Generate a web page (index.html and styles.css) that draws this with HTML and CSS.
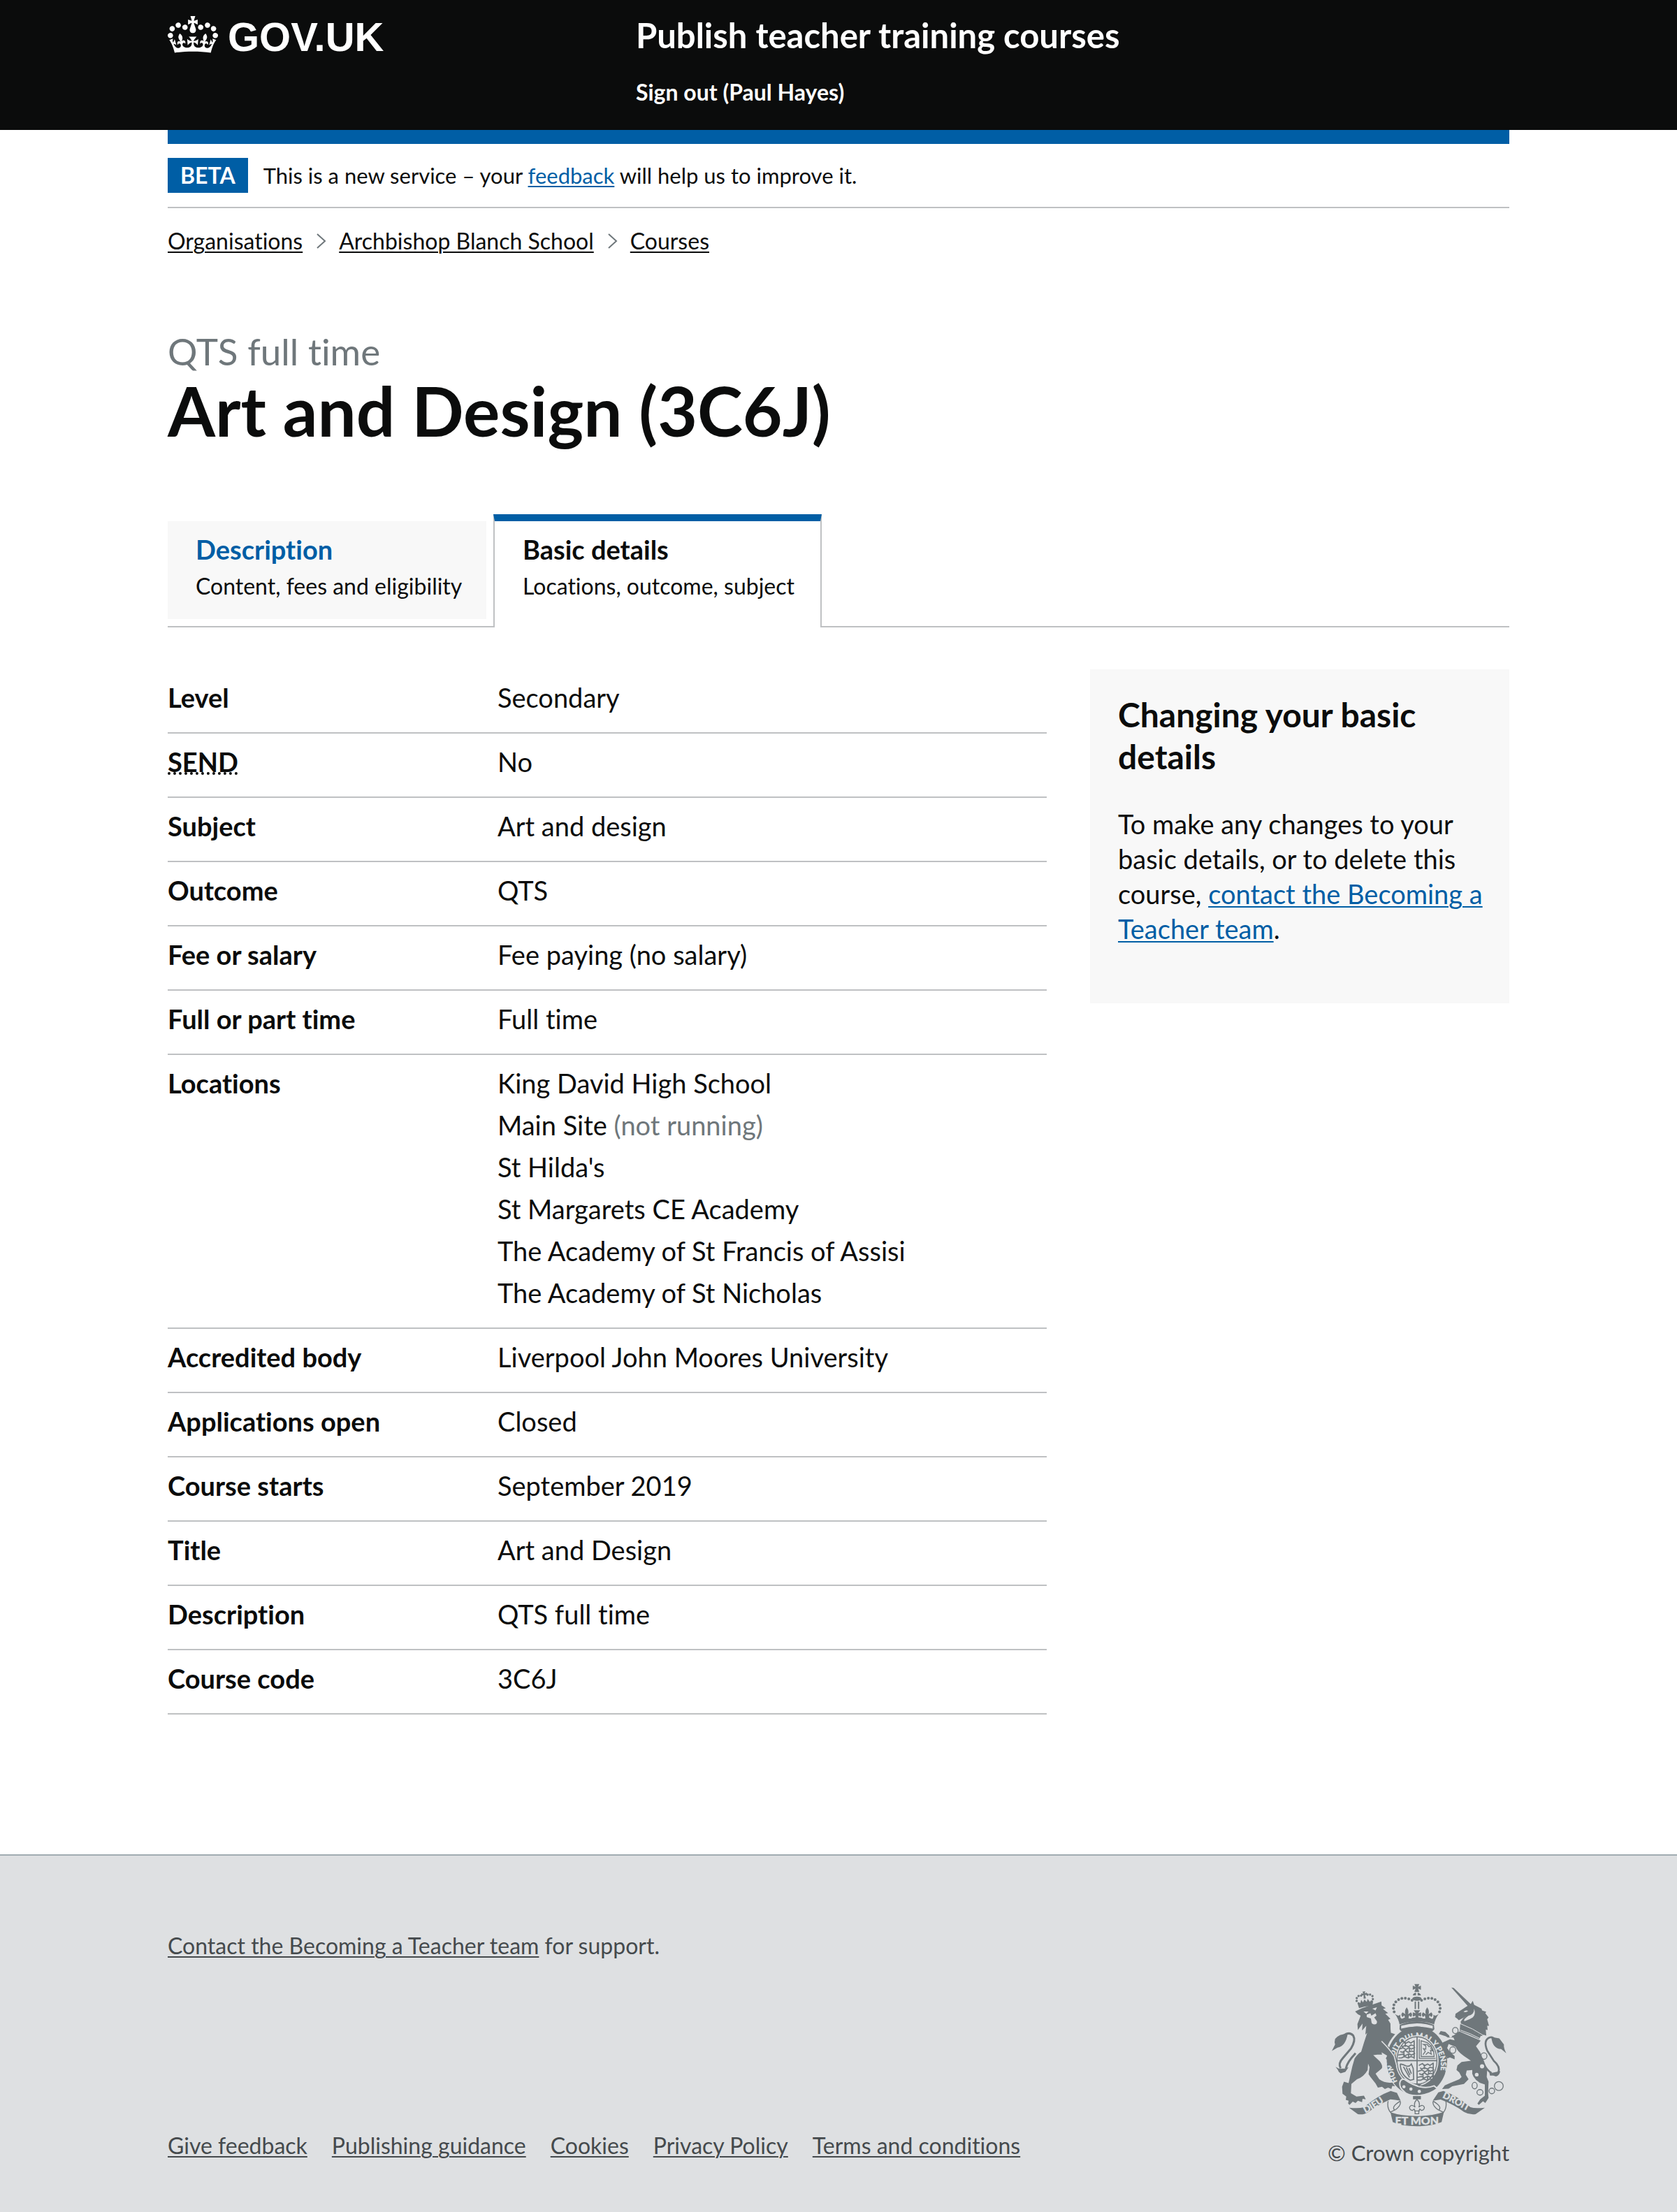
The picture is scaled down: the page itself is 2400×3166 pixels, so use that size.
FILE: index.html
```html
<!DOCTYPE html>
<html lang="en">
<head>
<meta charset="utf-8">
<meta name="viewport" content="width=device-width, initial-scale=1">
<title>Art and Design (3C6J) - Publish teacher training courses</title>
<link rel="stylesheet" href="styles.css">
</head>
<body>
<header class="header">
  <div class="container header__inner">
    <a class="logo" href="#">
      <svg class="logo__crown" viewBox="0 0 132 97" aria-hidden="true"><path fill="currentColor" fill-rule="evenodd" d="M25 30.2c3.5 1.5 7.7-.2 9.1-3.7 1.5-3.6-.2-7.8-3.9-9.2-3.6-1.4-7.6.3-9.1 3.9-1.4 3.5.3 7.5 3.9 9zM9 39.5c3.6 1.5 7.8-.2 9.2-3.7 1.5-3.6-.2-7.8-3.9-9.1-3.6-1.5-7.6.2-9.1 3.8-1.4 3.5.3 7.5 3.8 9zM4.4 57.2c3.5 1.5 7.7-.2 9.1-3.8 1.5-3.6-.2-7.7-3.9-9.1-3.5-1.5-7.6.3-9.1 3.8-1.4 3.5.3 7.6 3.9 9.1zm38.3-21.4c3.5 1.5 7.7-.2 9.1-3.8 1.5-3.6-.2-7.7-3.9-9.1-3.6-1.5-7.6.3-9.1 3.8-1.3 3.6.4 7.7 3.9 9.1zm64.4-5.6c-3.6 1.5-7.8-.2-9.1-3.7-1.5-3.6.2-7.8 3.8-9.2 3.6-1.4 7.7.3 9.2 3.9 1.3 3.5-.4 7.5-3.9 9zm15.9 9.3c-3.6 1.5-7.7-.2-9.1-3.7-1.5-3.6.2-7.8 3.7-9.1 3.6-1.5 7.7.2 9.2 3.8 1.5 3.5-.3 7.5-3.8 9zm4.7 17.7c-3.6 1.5-7.8-.2-9.2-3.8-1.5-3.6.2-7.7 3.9-9.1 3.6-1.5 7.7.3 9.2 3.8 1.3 3.5-.4 7.6-3.9 9.1zM89.3 35.8c-3.6 1.5-7.8-.2-9.2-3.8-1.4-3.6.2-7.7 3.9-9.1 3.6-1.5 7.7.3 9.2 3.8 1.4 3.6-.3 7.7-3.9 9.1zM69.7 17.7l8.9 4.7V9.3l-8.9 2.8c-.2-.3-.5-.6-.9-.9L72.4 0H59.6l3.5 11.2c-.3.3-.6.5-.9.9l-8.8-2.8v13.1l8.8-4.7c.3.3.6.7.9.9l-5 15.4v.1c-.2.8-.4 1.6-.4 2.4 0 4.1 3.1 7.5 7 8.1h.2c.3 0 .7.1 1 .1.4 0 .7 0 1-.1h.2c4-.6 7.1-4.1 7.1-8.1 0-.8-.1-1.7-.4-2.4V34l-5.1-15.4c.4-.2.7-.6 1-.9zM66 92.8c16.9 0 32.8 1.1 47.1 3.2 4-16.9 8.9-26.7 14-33.5l-9.6-3.4c1 4.9 1.1 7.2 0 10.2-1.5-1.4-3-4.3-4.2-8.7L108.6 76c2.8-2 5-3.2 7.5-3.3-4.4 9.4-10 11.9-13.6 11.2-4.3-.8-6.3-4.6-5.6-7.9 1-4.7 5.7-5.9 8-.5 4.3-8.7-3-11.4-7.6-8.8 7.1-7.2 7.9-13.5 2.1-21.1-8 6.1-8.1 12.3-4.5 20.8-4.7-5.4-12.1-2.5-9.5 6.2 3.4-5.2 7.9-2 7.2 3.1-.6 4.3-6.4 7.8-13.5 7.2-10.3-.9-10.9-8-11.2-13.8 2.5-.5 7.1 1.8 11 7.3L80.2 60c-4.1 4.4-8 5.3-12.3 5.4 1.4-4.4 8-11.6 8-11.6H55.5s6.4 7.2 7.9 11.6c-4.2-.1-8-1-12.3-5.4l1.4 16.4c3.9-5.5 8.5-7.7 10.9-7.3-.3 5.8-.9 12.8-11.1 13.8-7.2.6-12.9-2.9-13.5-7.2-.7-5 3.8-8.3 7.1-3.1 2.7-8.7-4.6-11.6-9.4-6.2 3.7-8.5 3.6-14.7-4.6-20.8-5.8 7.6-5 13.9 2.2 21.1-4.7-2.6-11.9.1-7.7 8.8 2.3-5.5 7.1-4.2 8.1.5.7 3.3-1.3 7.1-5.7 7.9-3.5.7-9-1.8-13.5-11.2 2.5.1 4.7 1.3 7.5 3.3l-4.7-15.4c-1.2 4.4-2.7 7.2-4.3 8.7-1.1-3-.9-5.3 0-10.2l-9.5 3.4c5 6.9 9.9 16.7 14 33.5 14.8-2.1 30.8-3.2 47.7-3.2z"/></svg>
      <span class="logo__text">GOV.UK</span>
    </a>
    <div class="header__content">
      <a class="header__service" href="#">Publish teacher training courses</a>
      <a class="header__signout" href="#">Sign out (Paul Hayes)</a>
    </div>
  </div>
</header>

<div class="container">
  <div class="header-bar"></div>
  <div class="phase-banner">
    <strong class="phase-banner__tag">BETA</strong>
    <span>This is a new service – your <a class="link" href="#">feedback</a> will help us to improve it.</span>
  </div>

  <nav aria-label="Breadcrumb">
    <ol class="breadcrumbs">
      <li><a href="#">Organisations</a></li>
      <li><svg class="chevron" viewBox="0 0 14 22" aria-hidden="true"><path d="M1 1l11 10L1 21" fill="none" stroke="currentColor" stroke-width="2"/></svg><a href="#">Archbishop Blanch School</a></li>
      <li><svg class="chevron" viewBox="0 0 14 22" aria-hidden="true"><path d="M1 1l11 10L1 21" fill="none" stroke="currentColor" stroke-width="2"/></svg><a href="#">Courses</a></li>
    </ol>
  </nav>

  <main>
    <h1 class="title"><span class="title__caption">QTS full time</span> Art and Design (3C6J)</h1>

    <nav class="tabs" aria-label="Course sections">
      <a class="tab" href="#"><span class="tab__name">Description</span><span class="tab__hint">Content, fees and eligibility</span></a>
      <a class="tab tab--selected" href="#" aria-current="page"><span class="tab__name">Basic details</span><span class="tab__hint">Locations, outcome, subject</span></a>
    </nav>

    <div class="columns">
      <dl class="summary">
        <div class="summary__row"><dt>Level</dt><dd>Secondary</dd></div>
        <div class="summary__row"><dt><abbr title="Special educational needs and disability">SEND</abbr></dt><dd>No</dd></div>
        <div class="summary__row"><dt>Subject</dt><dd>Art and design</dd></div>
        <div class="summary__row"><dt>Outcome</dt><dd>QTS</dd></div>
        <div class="summary__row"><dt>Fee or salary</dt><dd>Fee paying (no salary)</dd></div>
        <div class="summary__row"><dt>Full or part time</dt><dd>Full time</dd></div>
        <div class="summary__row"><dt>Locations</dt><dd>
          <ul class="locations">
            <li>King David High School</li>
            <li>Main Site <span class="muted">(not running)</span></li>
            <li>St Hilda's</li>
            <li>St Margarets CE Academy</li>
            <li>The Academy of St Francis of Assisi</li>
            <li>The Academy of St Nicholas</li>
          </ul></dd></div>
        <div class="summary__row"><dt>Accredited body</dt><dd>Liverpool John Moores University</dd></div>
        <div class="summary__row"><dt>Applications open</dt><dd>Closed</dd></div>
        <div class="summary__row"><dt>Course starts</dt><dd>September 2019</dd></div>
        <div class="summary__row"><dt>Title</dt><dd>Art and Design</dd></div>
        <div class="summary__row"><dt>Description</dt><dd>QTS full time</dd></div>
        <div class="summary__row"><dt>Course code</dt><dd>3C6J</dd></div>
      </dl>
      <aside class="panel">
        <h2 class="panel__title">Changing your basic details</h2>
        <p class="panel__text">To make any changes to your basic details, or to delete this course, <a class="link" href="#">contact the Becoming a Teacher team</a>.</p>
      </aside>
    </div>
  </main>
</div>

<footer class="footer">
  <div class="container">
    <p class="footer__support"><a href="#">Contact the Becoming a Teacher team</a> for support.</p>
    <div class="footer__bottom">
      <ul class="footer__links">
        <li><a href="#">Give feedback</a></li>
        <li><a href="#">Publishing guidance</a></li>
        <li><a href="#">Cookies</a></li>
        <li><a href="#">Privacy Policy</a></li>
        <li><a href="#">Terms and conditions</a></li>
      </ul>
      <a class="copyright" href="#">
        <svg class="arms" viewBox="129 118 754 616" aria-hidden="true">
          <defs>
            <path id="ring" d="M414 540A103 119 0 1 1 584 538"/>
            <path id="dieu" d="M276 676Q322 654 382 608"/>
            <path id="droit" d="M606 608Q660 634 740 680"/>
            <g id="beads"><circle cx="477" cy="190" r="6"/><circle cx="463" cy="184" r="6"/><circle cx="448" cy="181" r="6"/><circle cx="433" cy="182" r="6"/><circle cx="419" cy="187" r="6"/><circle cx="407" cy="197" r="6"/><circle cx="399" cy="210" r="6"/><circle cx="397" cy="225" r="6"/><circle cx="400" cy="240" r="6"/></g>
            <g id="lis"><path d="M454 220q12 17 5 30l13-8q10 10 0 20l-8-7-3 15h-14l-3-15-8 7q-10-10 0-20l13 8q-7-13 5-30z"/></g>
            <g id="lions" fill="none" stroke="#6f777b" stroke-width="5"><path d="M424 374l16-8 8 10 14-8 10 6 14-10M430 384l6 6 12-6 14 6 10-8 16 4M420 400l18-6 12 8 14-8 10 6 16-8M426 410l10 4 12-8 12 8 14-6 14 4M416 426l20-4 12 6 16-8 10 6 16-8M418 438l14 0 12-6 16 6 12-6 16 6M486 362v80M448 370v20M466 392v20M442 412v24M462 420v20"/></g>
          </defs>
          <g fill="#6f777b">
            <!-- royal crown -->
            <path d="M487 120h21l-5 12 12-5v18l-12-5 5 14h-21l5-14-12 5v-18l12 5z"/>
            <path d="M494 156v13h-14q2-10 14-13zM501 156v13h14q-2-10-14-13z"/>
            <ellipse cx="498" cy="183" rx="20" ry="9"/>
            <use href="#beads"/><use href="#beads" transform="matrix(-1 0 0 1 995 0)"/>
            <path d="M488 195h6v33h-6zM502 195h6v33h-6z"/>
            <use href="#lis"/><use href="#lis" x="88"/>
            <path d="M484 233h28l-9 13 13-4v18l-13-4 4 12h-18l4-12-13 4v-18l13 4z"/>
            <path d="M403 248q14 14 24 4-3 16 6 18 10-6 21-6 12 8 22 2 12-6 22 2 10-8 22-2 12 6 22-2 12 0 20 6 10-2 6-18 10 10 24-4-16 22-20 46-73-26-149 0-4-24-20-46z"/>
            <path d="M424 296q74-32 147 0l2 18q-8 12-18 12-57-24-114 0-12 0-18-12z"/>
            <path fill="#dee0e2" d="M430 300q68-22 136 0v12q-68-18-136 0z"/>
            <!-- garter -->
            <ellipse cx="498" cy="451" rx="130" ry="148"/>
            <ellipse cx="498" cy="449" rx="93" ry="109" fill="#dee0e2"/>
            <text class="arms__motto" font-size="32"><textPath href="#ring">HONI SOIT QUI MAL Y PENSE</textPath></text>
            <ellipse cx="498" cy="449" rx="86" ry="102" fill="none" stroke="#6f777b" stroke-width="4"/>
            <path d="M496 347h5v203h-5zM412 447h172v5H412z"/>
            <use href="#lions"/><use href="#lions" x="82" y="96"/>
            <path fill="none" stroke="#6f777b" stroke-width="4" d="M508 358v82h70M516 364v68h56q0-40-30-60zM524 424l10-14-8-12 10 2 0-14-10-6 16 0 8 10 10-4-2 12 10 10-12-2 4 16-14-8-10 10"/>
            <path fill="none" stroke="#6f777b" stroke-width="5" d="M426 464q2 50 44 70l14-4-2-46-8-20q-8 14-24 8-10-6-24-8M440 476l26 46M452 478l16 34M464 482l10 24"/>
            <path stroke="#dee0e2" stroke-width="6" d="M424 548q2-22 20-18 70 50 128 28l14 12q-40 30-88 30-44 0-60-22-14-10-14-30z"/>
            <circle cx="442" cy="562" r="7" fill="#dee0e2"/><circle cx="472" cy="572" r="7" fill="#dee0e2"/><circle cx="508" cy="582" r="7" fill="#dee0e2"/>
            <path d="M486 548h34l-12 12z"/>
            <!-- lion -->
            <g transform="rotate(-8 273 185)">
              <path d="M240 198q6-8 12 2l6-14 6 12 8-12 8 12 6-12 8 14q6-10 14-2l-6 22q-28-6-58 0z"/>
              <g><circle cx="238" cy="188" r="5"/><circle cx="240" cy="176" r="5"/><circle cx="249" cy="168" r="5"/><circle cx="260" cy="168" r="5"/><circle cx="308" cy="190" r="5"/><circle cx="308" cy="177" r="5"/><circle cx="299" cy="169" r="5"/><circle cx="288" cy="168" r="5"/></g>
              <path d="M268 152h12l-3 9 9-3v11l-9-2 2 16h-10l2-16-9 2v-11l9 3z"/>
            </g>
            <path d="M232 238l30-14 83-29 1 17 18 12-12 4 22 17-12 3 22 22-10 4 10 16q0 24 2 40l18 6-12 14q-14 18-20 35l36 48 10 45-14-6-12 8-12-12-12 2 6-18-10-12 6-12-24-14 2 10-20 0-18 2 28 26q16 20 8 32l-26 22 16 24q24 18 56 14l12 16-12-2-4 14-14-6-14 6-12-10-18 4-10-18-22-28-8-12 4-30-6-16-2 28q-16 30-46 40l-24 20-2 40 24 14 32-4 8 16-14-2-2 14-18-6-10 10-12-6-14 14-6-6 2-12-12-4 2-14-16-12-2-30 8-22 20 6 8-36q8-40 18-70 14-20 28-28 12-40 26-82l-8 8 4-38-18 20 2-30-20 28-2-26 14-36-12-6z"/>
            <path fill="#dee0e2" d="M268 238l22 0-10 10zM306 226l20-6-6 14zM282 252l16-6 4 10 18-10 4 10-10 8 12 16q2 14-12 14-12-2-12-14l-2-12-18-6z"/>
            <path fill="none" stroke="#6f777b" stroke-width="9" d="M234 418q-36 38-42 66M170 482q-12-20 8-42l36-42q22-36 10-56-18-20-44 2"/>
            <path d="M200 334q-38 0-54 22-4 14 0 24l-14 28 24-14q36-8 44-60zM148 476l14 8h26l16-6-14 20-20 6-8-6-4-8z"/>
            <path fill="none" stroke="#dee0e2" stroke-width="5" d="M346 366q34 34 54 64l12 46"/>
            <!-- unicorn -->
            <path d="M646 135l10 2 76 72-12 10zM662 262l2-14 42-28 24-15 8-13 6 18 32 16 2 8 18 6-4 6 14 18-6 8 8 28-8 0 2 18-8-2 2 26-12-4-8 6-34-20-54-28-2-14 12-16 14-8-20 10-14 8-6-6z"/>
            <path fill="#dee0e2" d="M698 240q10-10 20-4-8 8-20 4zM720 256q24-4 24-30 8 24-6 38-14 10-36 16-6-8 18-24z"/>
            <path d="M684 292l18 10 4-8 10 14 6-6 10 16 8-6 8 16 8-6 8 16 12-4-10 24q-42-22-84-36z"/>
            <path fill="none" stroke="#dee0e2" stroke-width="3" d="M684 318q44 14 88 38M688 292q52 20 94 48"/>
            <path d="M680 324l92 40-20 24q18 22 30 52l18 50-2 30 8 20-2 50 2 20-14 22-10-8-18 16-6-6 12-18 20-16 0-48-22-7q-38-25-32-55l-24 2-4 18 12 20-20 20-50 10-16 10-28 2 12-16 22-10 40-16 10-10-10-20-12-10 4-20 18-15 40-5-30-20q-28-20-36-40l-14-5-16-7-6 18 12 16 20 18 0 14-20-8-12 4-8-25-14-23 2-20 32-14 20 4-5-12-25 0-8-5-14-5-16-5 8-13 20 4 20 19 16-4z"/>
            <path fill="none" stroke="#6f777b" stroke-width="8" d="M784 462q18 34 34 40M848 500q10-24-20-50l-28-44q-18-44 10-56 14-4 22 8"/>
            <path d="M818 348l34 6 20 26q-2 14 10 38l-22-18q-38-2-42-52zM808 494l14 8 34-8q-2 18-18 24l-12-4-14 0z"/>
            <g fill="none" stroke="#6f777b" stroke-width="4"><ellipse cx="663" cy="320" rx="12" ry="13"/><ellipse cx="652" cy="404" rx="13" ry="14"/><ellipse cx="786" cy="430" rx="13" ry="14"/><ellipse cx="746" cy="557" rx="11" ry="14"/><ellipse cx="769" cy="586" rx="13" ry="12"/><circle cx="820" cy="580" r="12"/><circle cx="850" cy="559" r="19"/></g>
            <g fill="#dee0e2"><circle cx="778" cy="474" r="9"/><circle cx="755" cy="510" r="8"/><circle cx="643" cy="344" r="6"/><circle cx="786" cy="430" r="9"/></g>
            <!-- scroll -->
            <path d="M206 652q44 4 64-2 60-50 115-70l27 8 16 34-24-4-20-2q-54 24-94 54-20 14-46 10zM790 652q-44 4-62-2-58-50-116-70l-22 6-24 36 34-5q60 23 100 53 25 14 50 10zM384 672q46 16 114 16 62 0 116-18l-10 44q-44 18-106 18-68 0-104-18z"/>
            <path fill="none" stroke="#6f777b" stroke-width="4" d="M374 624q-6 30 12 50M426 624q-40 24-24 38l-20 10M426 624q6 18-22 38M622 622q6 30-10 50M568 624q40 24 24 38l20 10M568 624q-6 18 22 38"/>
            <text class="arms__motto" font-size="40"><textPath href="#dieu">DIEU</textPath></text>
            <text class="arms__motto" font-size="40"><textPath href="#droit">DROIT</textPath></text>
            <text class="arms__motto" font-size="48" x="498" y="724" text-anchor="middle">ET MON</text>
            <path d="M481 602h34v14h-34z"/>
            <path fill="none" stroke="#6f777b" stroke-width="4" d="M498 616q16 16 8 34 16-16 24 0 0 12-12 14l-8-6-4 8v12h-16v-12l-4-8-8 6q-12-2-12-14 8-16 24 0-8-18 8-34zM486 666h24"/>
          </g>
        </svg>
        <span>© Crown copyright</span>
      </a>
    </div>
  </div>
</footer>
</body>
</html>
```
FILE: styles.css
```css
* {
  box-sizing: border-box;
}

body {
  margin: 0;
  background: #fff;
  color: #0b0c0c;
  font-family: Lato, "Noto Sans", sans-serif;
  font-size: 38px;
  font-variant-ligatures: none;
  line-height: 50px;
}

h1, h2, p, ul, ol, dl, dd {
  margin: 0;
  padding: 0;
}

ul, ol {
  list-style: none;
}

a {
  color: inherit;
  text-decoration-thickness: 2px;
  text-underline-offset: 3px;
}

.link {
  color: #005ea5;
}

.container {
  max-width: 1920px;
  margin: 0 auto;
}

/* Header */
.header {
  background: #0b0c0c;
  color: #fff;
}

.header a {
  text-decoration: none;
}

.header__inner {
  display: grid;
  grid-template-columns: 670px 1fr;
  padding: 20px 0 34px;
}

.logo {
  display: flex;
  gap: 14px;
  align-items: flex-start;
  padding-top: 3px;
}

.logo__crown {
  width: 72px;
  height: 53px;
}

.logo__text {
  font-family: "Liberation Sans", sans-serif;
  font-size: 58px;
  font-weight: 700;
  line-height: 60px;
}

.header__content {
  display: flex;
  flex-direction: column;
  align-items: flex-start;
  gap: 32px;
  font-weight: 700;
}

.header__service {
  font-size: 49px;
  line-height: 60px;
}

.header__signout {
  font-size: 32px;
  line-height: 40px;
}

.header-bar {
  height: 20px;
  background: #005ea5;
}

.phase-banner {
  display: flex;
  gap: 22px;
  padding: 20px 0;
  border-bottom: 2px solid #bfc1c3;
  font-size: 31px;
}

.phase-banner__tag {
  padding: 0 18px;
  background: #005ea5;
  color: #fff;
  font-size: 32px;
}

.breadcrumbs {
  display: flex;
  gap: 20px;
  padding-top: 27px;
  font-size: 32px;
  line-height: 40px;
}

.breadcrumbs li {
  display: flex;
  align-items: center;
  gap: 18px;
}

.chevron {
  width: 14px;
  height: 22px;
  color: #6f777b;
}

/* Page title */
.title {
  padding: 108px 0 99px;
  font-size: 98px;
  line-height: 100px;
}

.title__caption {
  display: block;
  margin-bottom: 4px;
  color: #6f777b;
  font-size: 53px;
  font-weight: 400;
  line-height: 60px;
}

/* Tabs */
.tabs {
  display: flex;
  align-items: flex-end;
  gap: 10px;
  border-bottom: 2px solid #bfc1c3;
}

.tab {
  display: flex;
  flex-direction: column;
  gap: 8px;
  width: 456px;
  margin-bottom: 10px;
  padding: 15px 20px 27px 40px;
  background: #f8f8f8;
  text-decoration: none;
}

.tab--selected {
  width: 470px;
  margin-bottom: -2px;
  padding: 15px 20px 39px 40px;
  border: 2px solid #bfc1c3;
  border-top: 10px solid #005ea5;
  border-bottom: 0;
  background: #fff;
}

.tab__name {
  color: #005ea5;
  font-weight: 700;
}

.tab--selected .tab__name {
  color: inherit;
}

.tab__hint {
  font-size: 32px;
  line-height: 40px;
}

/* Summary and side panel */
.columns {
  display: grid;
  grid-template-columns: 1fr 600px;
  gap: 62px;
  align-items: start;
  padding: 60px 0 200px;
}

.summary__row {
  display: flex;
  padding: 15px 0 25px;
  border-bottom: 2px solid #bfc1c3;
}

.summary dt {
  flex: 0 0 472px;
  font-weight: 700;
}

abbr {
  text-decoration: underline dotted;
  text-decoration-thickness: 4px;
  text-underline-offset: 0;
}

.locations {
  display: grid;
  gap: 10px;
}

.muted {
  color: #6f777b;
}

.panel {
  padding: 35px 36px 82px 40px;
  background: #f8f8f8;
}

.panel__title {
  margin-bottom: 41px;
  font-size: 48px;
  line-height: 60px;
}

/* Footer */
.footer {
  padding: 109px 0 65px;
  border-top: 2px solid #a1acb2;
  background: #dee0e2;
  color: #454a4d;
  font-size: 32px;
  line-height: 40px;
}

.footer__bottom {
  display: flex;
  justify-content: space-between;
  align-items: flex-end;
  padding-top: 34px;
}

.footer__links {
  display: flex;
  gap: 35px;
  padding-bottom: 10px;
}

.copyright {
  display: flex;
  flex-direction: column;
  align-items: center;
  gap: 17px;
  font-size: 31px;
  text-decoration: none;
}

.arms {
  width: 251px;
  height: 205px;
}

.arms__motto {
  fill: #dee0e2;
  stroke: #dee0e2;
  stroke-width: 1px;
  font-weight: 900;
}

@media (max-width: 1980px) {
  .container {
    margin: 0 30px;
  }
}
```
